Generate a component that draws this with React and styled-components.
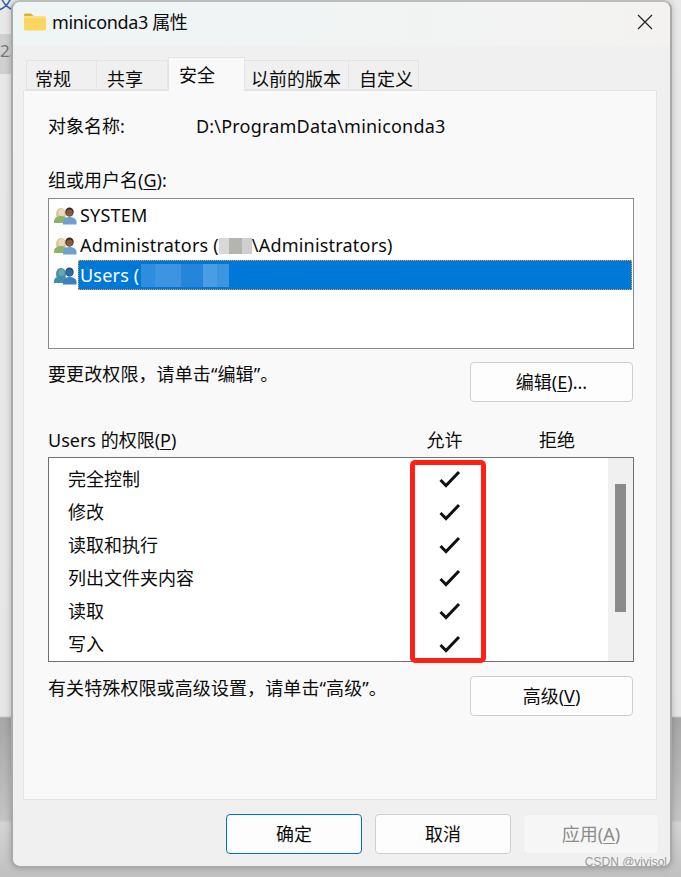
import React from "react";
import styled, { createGlobalStyle } from "styled-components";

const Global = createGlobalStyle`
  html, body { margin: 0; padding: 0; }
  body {
    font-family: "Noto Sans", "Noto Sans CJK SC", sans-serif;
    font-size: 18px;
    color: #0c0c0c;
  }
`;

const Desktop = styled.div`
  position: relative;
  width: 681px;
  height: 877px;
  overflow: hidden;
  box-sizing: border-box;
  padding: 0 9px 9px 11px;
  background: linear-gradient(
    #e9e9e9 0,
    #e6e6e6 716px,
    #a6a6a6 718px,
    #c4c4c4 820px,
    #d4d4d4 823px,
    #c0c0c0 877px
  );
`;

const BehindBand = styled.div`
  position: absolute;
  left: 0;
  top: 34px;
  width: 14px;
  height: 40px;
  background: #d0d0d0;
  color: #777;
  font-size: 17px;
  line-height: 34px;
  overflow: hidden;
`;

const BehindGlyph = styled.div`
  position: absolute;
  left: -3px;
  top: -10px;
  color: #2a5ca8;
  font-size: 18px;
  line-height: 24px;
`;

const Window = styled.div`
  position: relative;
  height: 100%;
  box-sizing: border-box;
  display: flex;
  flex-direction: column;
  border: 2px solid #a9a9a9;
  border-top-color: #bdbdbd;
  border-radius: 9px;
  background: #f0f0f0;
  overflow: hidden;
  box-shadow: 0 0 7px rgba(0, 0, 0, 0.22);
`;

const TitleBar = styled.div`
  height: 43px;
  flex: none;
  box-sizing: border-box;
  display: flex;
  align-items: center;
  gap: 6px;
  padding: 0 17px 3px 11px;
  background: linear-gradient(90deg, #eef5f5, #f3f2f1);
`;

const Title = styled.span`
  font-size: 18px;
  flex: 1;
  line-height: 24px;
  letter-spacing: -0.35px;
`;

const Body = styled.div`
  flex: 1;
  display: flex;
  flex-direction: column;
  padding: 12px 13px 0 10px;
`;

const Tabs = styled.div`
  display: flex;
  height: 33px;
  align-items: flex-end;
  padding-left: 3px;
  position: relative;
  z-index: 1;
`;

const Tab = styled.div`
  box-sizing: border-box;
  width: ${(p) => p.$w}px;
  height: ${(p) => (p.$active ? 34 : 30)}px;
  margin-bottom: ${(p) => (p.$active ? -1 : 0)}px;
  background: ${(p) => (p.$active ? "#f9f9f9" : "#f0f0f0")};
  border: 1px solid #e4e4e4;
  border-bottom: ${(p) => (p.$active ? "none" : "1px solid #e4e4e4")};
  border-left-width: ${(p) => (p.$first || p.$active ? 1 : 0)}px;
  font-size: 18px;
  line-height: 26px;
  padding-top: ${(p) => (p.$active ? 4 : 5)}px;
  padding-left: ${(p) => p.$pl}px;
  white-space: nowrap;
`;

const Panel = styled.div`
  box-sizing: border-box;
  height: 710px;
  background: #f9f9f9;
  border: 1px solid #e4e4e4;
  padding: 22px 23px 0 24px;
  display: flex;
  flex-direction: column;
`;

const ObjectRow = styled.div`
  display: flex;
  line-height: 26px;
  height: 26px;
  margin-bottom: 28px;
`;

const ObjectLabel = styled.span`
  width: 148px;
  flex: none;
`;

const ObjectPath = styled.span`
  letter-spacing: 0.2px;
`;

const Caption = styled.div`
  line-height: 26px;
  height: 26px;
`;

const GroupList = styled.div`
  box-sizing: border-box;
  height: 151px;
  margin: 5px -1px 0 0;
  background: #fff;
  border: 1px solid #8a8a8a;
  padding: 1px 1px;
`;

const GroupRow = styled.div`
  height: 30px;
  display: flex;
  align-items: center;
  padding-left: 4px;
  gap: 0;
`;

const GroupName = styled.div`
  flex: 1;
  height: 30px;
  line-height: 30px;
  padding-left: 2px;
  white-space: nowrap;
  box-sizing: border-box;
  letter-spacing: 0.2px;
  background: ${(p) => (p.$selected ? "#0078d7" : "transparent")};
  color: ${(p) => (p.$selected ? "#fff" : "#0c0c0c")};
  outline: ${(p) => (p.$selected ? "1px dotted #e8a040" : "none")};
  outline-offset: -1px;
`;

const Mosaic = styled.span`
  display: inline-flex;
  vertical-align: middle;
  height: ${(p) => p.$h}px;
  margin-top: -3px;
  margin-left: ${(p) => p.$ml || 0}px;
`;

const Cell = styled.span`
  width: ${(p) => p.$w}px;
  height: 100%;
  background: ${(p) => p.$c};
`;

const ActionRow = styled.div`
  display: flex;
  justify-content: space-between;
  align-items: flex-start;
  margin-top: ${(p) => p.$mt}px;
`;

const Hint = styled.div`
  line-height: 26px;
  letter-spacing: 0.1px;
  margin-top: -1px;
`;

const Button = styled.button`
  box-sizing: border-box;
  width: ${(p) => p.$w || 163}px;
  height: 40px;
  margin-left: ${(p) => p.$ml || 0}px;
  font-family: inherit;
  font-size: 18px;
  line-height: 24px;
  padding: 0;
  color: ${(p) => (p.disabled ? "#8c8c8c" : "#0c0c0c")};
  background: ${(p) => (p.disabled ? "#f6f6f6" : "#fdfdfd")};
  border: 1px solid
    ${(p) => (p.$primary ? "#0072cc" : p.disabled ? "#ededed" : "#cfcfcf")};
  border-radius: 4px;
`;

const Key = styled.span`
  text-decoration: underline;
  text-underline-offset: 2px;
`;

const PermHeader = styled.div`
  display: grid;
  grid-template-columns: 340px 113px 112px;
  margin-top: 25px;
  line-height: 26px;
  height: 26px;
`;

const HeadCell = styled.span`
  text-align: center;
`;

const PermList = styled.div`
  position: relative;
  box-sizing: border-box;
  height: 205px;
  margin: 4px -1px 0 0;
  background: #fff;
  border: 1px solid #6f6f6f;
  display: flex;
`;

const PermRows = styled.div`
  flex: 1;
  padding-top: 5px;
  overflow: hidden;
`;

const PermRow = styled.div`
  height: 33px;
  display: grid;
  grid-template-columns: 19px 343px 78px;
  align-items: center;
  line-height: 33px;
`;

const PermName = styled.span`
  grid-column: 2;
`;

const CheckCell = styled.span`
  grid-column: 3;
  display: flex;
  justify-content: center;
  margin-top: -2px;
`;

const Scroll = styled.div`
  width: 25px;
  flex: none;
  background: #f0f0f0;
  padding: 26px 7px 0;
  box-sizing: border-box;
`;

const Thumb = styled.div`
  height: 128px;
  width: 11px;
  background: #8b8b8b;
`;

const RedBox = styled.div`
  position: absolute;
  left: 361px;
  top: 2px;
  width: 76px;
  height: 203px;
  box-sizing: border-box;
  border: 5px solid #ff2015;
  border-radius: 5px;
`;

const Footer = styled.div`
  display: flex;
  justify-content: flex-end;
  padding-top: 14px;
  margin-right: -2px;
`;

const Watermark = styled.span`
  position: absolute;
  right: 3px;
  bottom: -4px;
  font-family: "Liberation Sans", sans-serif;
  font-size: 12px;
  line-height: 15px;
  color: #9a9a9a;
`;

const Folder = () => (
  <svg width="22" height="18" viewBox="0 0 22 18">
    <path d="M0 3V2a1.500 1.500 0 0 1 1.500-1.500H7L9.500 3z" fill="#e8ad2c" />
    <rect x="0" y="3" width="22" height="14.500" rx="1.500" fill="#fdd662" />
    <rect x="0" y="3.500" width="22" height="1" fill="#ffeaa8" />
  </svg>
);

const Close = () => (
  <svg width="16" height="16" viewBox="0 0 16 16">
    <path d="M1 1l14 14M15 1L1 15" stroke="#222" strokeWidth="1.200" fill="none" />
  </svg>
);

const People = ({ hairA, skinA, bodyA, hairB, skinB, bodyB }) => (
  <svg width="24" height="20" viewBox="0 0 24 20">
    <path d="M2.500 12c-1-3-.5-9 4.500-9s5.500 6 4.500 9z" fill={hairA} />
    <ellipse cx="7.500" cy="7.500" rx="3" ry="3.600" fill={skinA} />
    <path d="M0 18v-2.500C.5 12.500 4 11 7 11s5 1 6 3v4z" fill={bodyA} />
    <ellipse cx="15.500" cy="7" rx="4.200" ry="4.600" fill={hairB} />
    <ellipse cx="15.500" cy="8" rx="3.200" ry="3.400" fill={skinB} />
    <path d="M9 19.500v-3c.5-3 3-4.500 6.500-4.500s6.500 1.500 7 4.500v3z" fill={bodyB} />
  </svg>
);

const Check = () => (
  <svg width="22" height="18" viewBox="0 0 22 18">
    <path d="M1.500 10l5.500 5.500L20 2" stroke="#111" strokeWidth="3" fill="none" />
  </svg>
);

const warmPerson = {
  hairA: "#d9c79c",
  skinA: "#ecd9bd",
  bodyA: "#8cb368",
  hairB: "#3a2a20",
  skinB: "#8a5a3c",
  bodyB: "#6f9fd2",
};

const bluePerson = {
  hairA: "#4f8fa0",
  skinA: "#68a8b4",
  bodyA: "#3f8fa5",
  hairB: "#1f4f80",
  skinB: "#2f6aa0",
  bodyB: "#3a80c8",
};

const perms = ["完全控制", "修改", "读取和执行", "列出文件夹内容", "读取", "写入"];

export default function App() {
  return (
    <Desktop>
      <Global />
      <BehindGlyph>文</BehindGlyph>
      <BehindBand>23</BehindBand>
      <Window>
        <TitleBar>
          <Folder />
          <Title>miniconda3 属性</Title>
          <Close />
        </TitleBar>
        <Body>
          <Tabs>
            <Tab $w={71} $pl={8} $first>常规</Tab>
            <Tab $w={71} $pl={10}>共享</Tab>
            <Tab $w={77} $pl={10} $active>安全</Tab>
            <Tab $w={104} $pl={6}>以前的版本</Tab>
            <Tab $w={70} $pl={10}>自定义</Tab>
          </Tabs>
          <Panel>
            <ObjectRow>
              <ObjectLabel>对象名称:</ObjectLabel>
              <ObjectPath>D:\ProgramData\miniconda3</ObjectPath>
            </ObjectRow>
            <Caption>组或用户名(<Key>G</Key>):</Caption>
            <GroupList>
              <GroupRow>
                <People {...warmPerson} />
                <GroupName>SYSTEM</GroupName>
              </GroupRow>
              <GroupRow>
                <People {...warmPerson} />
                <GroupName>
                  Administrators (
                  <Mosaic $h={16}>
                    <Cell $w={10} $c="#d8d8d8" />
                    <Cell $w={13} $c="#b5b5b0" />
                    <Cell $w={10} $c="#cfcfcf" />
                  </Mosaic>
                  \Administrators)
                </GroupName>
              </GroupRow>
              <GroupRow>
                <People {...bluePerson} />
                <GroupName $selected>
                  Users (
                  <Mosaic $h={23} $ml={2}>
                    <Cell $w={14} $c="#2f8de0" />
                    <Cell $w={26} $c="#3d95e2" />
                    <Cell $w={22} $c="#2585dd" />
                    <Cell $w={14} $c="#4a9ce4" />
                    <Cell $w={12} $c="#3d95e2" />
                  </Mosaic>
                </GroupName>
              </GroupRow>
            </GroupList>
            <ActionRow $mt={13}>
              <Hint>要更改权限，请单击“编辑”。</Hint>
              <Button>编辑(<Key>E</Key>)...</Button>
            </ActionRow>
            <PermHeader>
              <span>Users 的权限(<Key>P</Key>)</span>
              <HeadCell>允许</HeadCell>
              <HeadCell>拒绝</HeadCell>
            </PermHeader>
            <PermList>
              <PermRows>
                {perms.map((p) => (
                  <PermRow key={p}>
                    <PermName>{p}</PermName>
                    <CheckCell><Check /></CheckCell>
                  </PermRow>
                ))}
              </PermRows>
              <Scroll><Thumb /></Scroll>
              <RedBox />
            </PermList>
            <ActionRow $mt={14}>
              <Hint>有关特殊权限或高级设置，请单击“高级”。</Hint>
              <Button>高级(<Key>V</Key>)</Button>
            </ActionRow>
          </Panel>
          <Footer>
            <Button $w={136} $primary>确定</Button>
            <Button $w={136} $ml={13}>取消</Button>
            <Button $w={136} $ml={12} disabled>应用(<Key>A</Key>)</Button>
          </Footer>
        </Body>
        <Watermark>CSDN @vivisol</Watermark>
      </Window>
    </Desktop>
  );
}
